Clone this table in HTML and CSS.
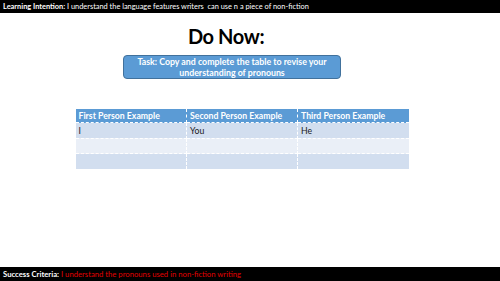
FILE: index.html
```html
<!DOCTYPE html>
<html>
<head>
<meta charset="utf-8">
<link rel="stylesheet" href="styles.css">
</head>
<body>
<div class="slide">
  <div class="topbar"><b>Learning Intention:</b> I understand the language features writers&nbsp; can use n a piece of non-fiction</div>
  <div class="main">
    <h1 class="title">Do Now:</h1>
    <div class="task">Task: Copy and complete the table to revise your understanding of pronouns</div>
    <table class="grid">
      <thead>
        <tr><th>First Person Example</th><th>Second Person Example</th><th>Third Person Example</th></tr>
      </thead>
      <tbody>
        <tr class="odd"><td>I</td><td>You</td><td>He</td></tr>
        <tr class="even"><td></td><td></td><td></td></tr>
        <tr class="odd"><td></td><td></td><td></td></tr>
      </tbody>
    </table>
  </div>
  <div class="bottombar"><b>Success Criteria:</b> <span class="red">I understand the pronouns used in non-fiction writing</span></div>
</div>
</body>
</html>
```
FILE: styles.css
```css
html, body { margin: 0; padding: 0; background: #fff; }
body { font-family: Lato, "Open Sans", "Liberation Sans", sans-serif; }
.slide { width: 500px; height: 281px; display: flex; flex-direction: column; overflow: hidden; }
.topbar { height: 13px; background: #000; color: #fff; font-size: 7.4px; line-height: 13px; padding-left: 3px; white-space: nowrap; }
.topbar b { font-weight: 700; }
.main { flex: 1; display: flex; flex-direction: column; align-items: center; }
.title { margin: 11px 0 0 -48px; font-size: 20px; letter-spacing: -0.4px; line-height: 24px; font-weight: 700; color: #000; }
.task { margin-top: 7px; margin-left: -36px; width: 216px; height: 22px; background: #5b9bd5; border: 1px solid #41719c; border-radius: 4px; color: #fff; font-weight: 700; font-size: 8.8px; line-height: 11px; text-align: center; display: flex; align-items: center; justify-content: center; }
.grid { margin-top: 30px; margin-left: -16px; width: 333px; border-collapse: collapse; font-size: 8.7px; table-layout: fixed; }
.grid th, .grid td { border: 1px dashed #fff; text-align: left; padding: 0 3px; vertical-align: middle; }
.grid th { background: #5b9bd5; color: #fff; font-weight: 700; height: 13px; }
.grid td { height: 14.5px; color: #1a1a1a; }
.grid tr.odd td { background: #d2deef; }
.grid tr.even td { background: #eaeff7; }
.grid tr > :first-child { border-left: none; }
.grid tr > :last-child { border-right: none; }
.grid thead th { border-top: none; }
.grid tbody tr:last-child td { border-bottom: none; }
.bottombar { height: 14px; background: #000; color: #fff; font-size: 7.7px; line-height: 14px; padding-left: 3px; white-space: nowrap; }
.bottombar .red { color: #e00000; }
```
